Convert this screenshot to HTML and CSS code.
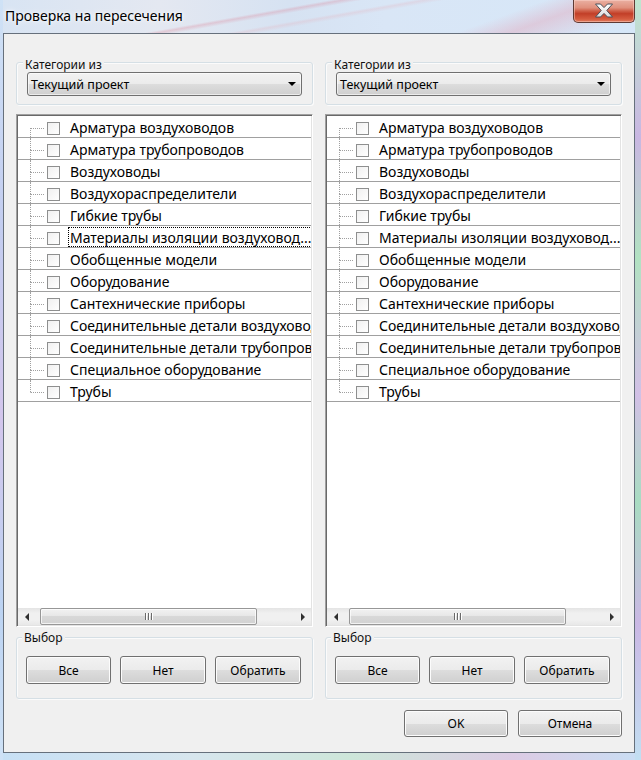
FILE: index.html
```html
<!DOCTYPE html>
<html lang="ru">
<head>
<meta charset="utf-8">
<title>Проверка на пересечения</title>
<link rel="stylesheet" href="styles.css">
</head>
<body>
<div class="window">
  <div class="titlebar">
    <div class="title">Проверка на пересечения</div>
    <div class="close">
      <svg width="20" height="15" viewBox="0 0 20 15">
        <defs>
          <linearGradient id="xg" x1="0" y1="0" x2="0" y2="1">
            <stop offset="0" stop-color="#ffffff"/>
            <stop offset="1" stop-color="#dcdcdc"/>
          </linearGradient>
        </defs>
        <polygon points="1.5,1 6.5,1 10,4.6 13.5,1 18.5,1 12.8,7.5 18.5,14 13.5,14 10,10.4 6.5,14 1.5,14 7.2,7.5" fill="url(#xg)" stroke="#4a4f58" stroke-width="1" stroke-linejoin="round"/>
      </svg>
    </div>
  </div>
  <div class="client">
    <div class="panels">
      <div class="panel">
        <div class="group cat">
          <div class="group-label">Категории из</div>
          <div class="combo"><span>Текущий проект</span><span class="combo-arrow"></span></div>
        </div>
        <div class="listbox">
          <div class="rows">
            <div class="row first"><span class="branch"><span class="b-top"></span><span class="b-bot"></span></span><span class="check"></span><span class="label">Арматура воздуховодов</span></div>
            <div class="row"><span class="branch"><span class="b-top"></span><span class="b-bot"></span></span><span class="check"></span><span class="label">Арматура трубопроводов</span></div>
            <div class="row"><span class="branch"><span class="b-top"></span><span class="b-bot"></span></span><span class="check"></span><span class="label">Воздуховоды</span></div>
            <div class="row"><span class="branch"><span class="b-top"></span><span class="b-bot"></span></span><span class="check"></span><span class="label">Воздухораспределители</span></div>
            <div class="row"><span class="branch"><span class="b-top"></span><span class="b-bot"></span></span><span class="check"></span><span class="label">Гибкие трубы</span></div>
            <div class="row"><span class="branch"><span class="b-top"></span><span class="b-bot"></span></span><span class="check"></span><span class="label focus">Материалы изоляции воздуховод...</span></div>
            <div class="row"><span class="branch"><span class="b-top"></span><span class="b-bot"></span></span><span class="check"></span><span class="label">Обобщенные модели</span></div>
            <div class="row"><span class="branch"><span class="b-top"></span><span class="b-bot"></span></span><span class="check"></span><span class="label">Оборудование</span></div>
            <div class="row"><span class="branch"><span class="b-top"></span><span class="b-bot"></span></span><span class="check"></span><span class="label">Сантехнические приборы</span></div>
            <div class="row"><span class="branch"><span class="b-top"></span><span class="b-bot"></span></span><span class="check"></span><span class="label">Соединительные детали воздуховодов</span></div>
            <div class="row"><span class="branch"><span class="b-top"></span><span class="b-bot"></span></span><span class="check"></span><span class="label">Соединительные детали трубопроводов</span></div>
            <div class="row"><span class="branch"><span class="b-top"></span><span class="b-bot"></span></span><span class="check"></span><span class="label">Специальное оборудование</span></div>
            <div class="row last"><span class="branch"><span class="b-top"></span><span class="b-bot"></span></span><span class="check"></span><span class="label">Трубы</span></div>
          </div>
          <div class="hscroll">
            <span class="sb-btn"><span class="arr-left"></span></span>
            <span class="sb-track"><span class="sb-thumb"><span class="grip"></span><span class="grip"></span><span class="grip"></span></span></span>
            <span class="sb-btn"><span class="arr-right"></span></span>
          </div>
        </div>
        <div class="group sel">
          <div class="group-label">Выбор</div>
          <div class="btn-row">
            <button class="btn b1">Все</button>
            <button class="btn b2">Нет</button>
            <button class="btn b3">Обратить</button>
          </div>
        </div>
      </div>

      <div class="panel">
        <div class="group cat">
          <div class="group-label">Категории из</div>
          <div class="combo"><span>Текущий проект</span><span class="combo-arrow"></span></div>
        </div>
        <div class="listbox">
          <div class="rows">
            <div class="row first"><span class="branch"><span class="b-top"></span><span class="b-bot"></span></span><span class="check"></span><span class="label">Арматура воздуховодов</span></div>
            <div class="row"><span class="branch"><span class="b-top"></span><span class="b-bot"></span></span><span class="check"></span><span class="label">Арматура трубопроводов</span></div>
            <div class="row"><span class="branch"><span class="b-top"></span><span class="b-bot"></span></span><span class="check"></span><span class="label">Воздуховоды</span></div>
            <div class="row"><span class="branch"><span class="b-top"></span><span class="b-bot"></span></span><span class="check"></span><span class="label">Воздухораспределители</span></div>
            <div class="row"><span class="branch"><span class="b-top"></span><span class="b-bot"></span></span><span class="check"></span><span class="label">Гибкие трубы</span></div>
            <div class="row"><span class="branch"><span class="b-top"></span><span class="b-bot"></span></span><span class="check"></span><span class="label">Материалы изоляции воздуховод...</span></div>
            <div class="row"><span class="branch"><span class="b-top"></span><span class="b-bot"></span></span><span class="check"></span><span class="label">Обобщенные модели</span></div>
            <div class="row"><span class="branch"><span class="b-top"></span><span class="b-bot"></span></span><span class="check"></span><span class="label">Оборудование</span></div>
            <div class="row"><span class="branch"><span class="b-top"></span><span class="b-bot"></span></span><span class="check"></span><span class="label">Сантехнические приборы</span></div>
            <div class="row"><span class="branch"><span class="b-top"></span><span class="b-bot"></span></span><span class="check"></span><span class="label">Соединительные детали воздуховодов</span></div>
            <div class="row"><span class="branch"><span class="b-top"></span><span class="b-bot"></span></span><span class="check"></span><span class="label">Соединительные детали трубопроводов</span></div>
            <div class="row"><span class="branch"><span class="b-top"></span><span class="b-bot"></span></span><span class="check"></span><span class="label">Специальное оборудование</span></div>
            <div class="row last"><span class="branch"><span class="b-top"></span><span class="b-bot"></span></span><span class="check"></span><span class="label">Трубы</span></div>
          </div>
          <div class="hscroll">
            <span class="sb-btn"><span class="arr-left"></span></span>
            <span class="sb-track"><span class="sb-thumb"><span class="grip"></span><span class="grip"></span><span class="grip"></span></span></span>
            <span class="sb-btn"><span class="arr-right"></span></span>
          </div>
        </div>
        <div class="group sel">
          <div class="group-label">Выбор</div>
          <div class="btn-row">
            <button class="btn b1">Все</button>
            <button class="btn b2">Нет</button>
            <button class="btn b3">Обратить</button>
          </div>
        </div>
      </div>
    </div>
    <div class="footer">
      <button class="btn wide">OK</button>
      <button class="btn wide">Отмена</button>
    </div>
  </div>
</div>
</body>
</html>
```

FILE: styles.css
```css
* { box-sizing: border-box; }

html, body {
  margin: 0;
  padding: 0;
}

body {
  width: 641px;
  height: 760px;
  overflow: hidden;
  font-family: "Noto Sans", "Open Sans", sans-serif;
  color: #000;
  background:
    linear-gradient(180deg, #bfe6cf 0%, #c9b7e2 18%, #b2e2c2 34%, #d2c0e6 52%, #a9dcc2 66%, #cab8e4 82%, #c2dff2 100%) right top / 6px 100% no-repeat,
    linear-gradient(180deg, #cfe2f6 0%, #c3cdf0 30%, #d3c6ec 55%, #bcd3f2 80%, #cfe2f6 100%) left top / 3px 100% no-repeat,
    linear-gradient(90deg, #c7e0f5 0%, #d7e6ee 30%, #cde6d9 55%, #dccbe4 80%, #c9def4 100%) left bottom / 100% 8px no-repeat,
    linear-gradient(160deg, transparent 0 20%, rgba(230,150,170,.35) 22%, transparent 25%, transparent 34%, rgba(160,200,240,.45) 36%, transparent 40%),
    linear-gradient(170deg, transparent 0 48%, rgba(220,120,140,.28) 50%, transparent 53%, transparent 60%, rgba(230,170,180,.25) 62%, transparent 65%) 0 0 / 460px 40px no-repeat,
    linear-gradient(90deg, #d8e4f3 0%, #e4e8f1 25%, #d6e2f2 45%, #d9e6f6 60%, #d6e7f8 100%);
}

.window {
  height: 760px;
  display: flex;
  flex-direction: column;
}

/* ---------- title bar ---------- */
.titlebar {
  height: 33px;
  flex: none;
  display: flex;
  align-items: flex-start;
  padding: 0 6px 0 5px;
}

.title {
  font-size: 14px;
  line-height: 20px;
  padding-top: 6px;
  color: #000;
  text-shadow: 0 0 6px rgba(255,255,255,.95), 0 0 3px rgba(255,255,255,.9);
  letter-spacing: 0;
}

.close {
  margin-left: auto;
  width: 62px;
  height: 23px;
  border: 1px solid #5e3a34;
  border-top: none;
  border-radius: 0 0 5px 5px;
  background: linear-gradient(180deg, #eab0a2 0%, #e0907d 35%, #cf5f48 50%, #c23f28 62%, #d45a3e 85%, #e07a5c 100%);
  box-shadow: inset 0 0 0 1px rgba(255,220,210,.45);
  display: flex;
  align-items: center;
  justify-content: center;
  padding-bottom: 1px;
}

/* ---------- client ---------- */
.client {
  margin: 0 6px 0 3px;
  height: 720px;
  flex: none;
  border: 1px solid #66707c;
  background: #f0f0f0;
  padding: 28px 12px 0 12px;
}

.panels {
  display: flex;
  gap: 12px;
}

.panel {
  width: 297px;
  display: flex;
  flex-direction: column;
}

.group {
  border: 1px solid #d5dfe5;
  border-radius: 3px;
  box-shadow: 1px 1px 0 #fbfbfb, inset 1px 1px 0 #fbfbfb;
}

.group-label {
  width: fit-content;
  height: 16px;
  line-height: 16px;
  font-size: 12px;
  padding: 0 2px;
  background: #f0f0f0;
  color: #101010;
  white-space: nowrap;
}

.cat {
  height: 43px;
  padding: 0 10px;
}

.cat .group-label {
  height: 15px;
  margin: -6px 0 0 -4px;
}

.combo {
  height: 24px;
  margin-top: 0;
  border: 1px solid #707070;
  border-radius: 3px;
  background: linear-gradient(180deg, #f2f2f2 0%, #ebebeb 50%, #dddddd 50%, #cfcfcf 100%);
  box-shadow: inset 0 0 0 1px rgba(255,255,255,.6);
  display: flex;
  align-items: center;
  padding: 0 5px 0 3px;
  font-size: 12.5px;
  white-space: nowrap;
}

.combo-arrow {
  margin-left: auto;
  width: 0;
  height: 0;
  border-left: 4px solid transparent;
  border-right: 4px solid transparent;
  border-top: 4px solid #000;
}

/* ---------- list ---------- */
.listbox {
  height: 513px;
  margin-top: 9px;
  padding: 1px;
  display: flex;
  flex-direction: column;
  background: #fff;
  border: 1px solid;
  border-color: #a0a0a0 #ffffff #ffffff #a0a0a0;
  box-shadow: inset 1px 1px 0 #696969, inset -1px -1px 0 #e3e3e3;
}

.rows {
  flex: 1;
  overflow: hidden;
  background: #fff;
}

.row {
  height: 22px;
  border-bottom: 1px solid #a0a0a0;
  display: flex;
  align-items: stretch;
  white-space: nowrap;
  font-size: 14px;
}

.branch {
  flex: none;
  width: 14px;
  margin-left: 12px;
  display: flex;
  flex-direction: column;
}

.b-top {
  height: 12px;
  border-left: 1px dotted #a0a0a0;
}

.b-bot {
  flex: 1;
  border-top: 1px dotted #a0a0a0;
  border-left: 1px dotted #a0a0a0;
}

.row.first .b-top { border-left-color: transparent; }
.row.last .b-bot { border-left-color: transparent; }

.check {
  flex: none;
  width: 13px;
  height: 13px;
  margin: 6px 0 0 3px;
  border: 1px solid #8e8f8f;
  background: linear-gradient(135deg, #f0f0f0, #ffffff);
}

.label {
  flex: none;
  margin: 1px 0 0 8px;
  padding: 0 1px;
  height: 20px;
  line-height: 19px;
  border: 1px dotted transparent;
}

.label.focus {
  border-color: #000;
}

/* ---------- scrollbar ---------- */
.hscroll {
  height: 17px;
  flex: none;
  display: flex;
  background: linear-gradient(180deg, #e4e4e4 0%, #f0f0f0 30%, #f0f0f0 70%, #e8e8e8 100%);
}

.sb-btn {
  width: 17px;
  flex: none;
  display: flex;
  align-items: center;
  justify-content: center;
}

.arr-left {
  width: 0; height: 0;
  border-top: 4px solid transparent;
  border-bottom: 4px solid transparent;
  border-right: 4px solid #303030;
}

.arr-right {
  width: 0; height: 0;
  border-top: 4px solid transparent;
  border-bottom: 4px solid transparent;
  border-left: 4px solid #303030;
}

.sb-track {
  flex: 1;
  display: flex;
}

.sb-thumb {
  margin-left: 5px;
  width: 217px;
  height: 17px;
  border: 1px solid #979797;
  border-radius: 2px;
  background: linear-gradient(180deg, #f2f2f2 0%, #e6e6e6 50%, #d8d8d8 50%, #d2d2d2 100%);
  box-shadow: inset 0 0 0 1px rgba(255,255,255,.7);
  display: flex;
  align-items: center;
  justify-content: center;
  gap: 2px;
}

.grip {
  width: 1px;
  height: 7px;
  background: #6a6a6a;
  box-shadow: 1px 0 0 #ffffff;
}

/* ---------- selection group ---------- */
.sel {
  height: 62px;
  margin-top: 10px;
  padding: 0 11px 0 9px;
}

.sel .group-label {
  margin: -8px 0 0 -4px;
  height: 15px;
}

.btn-row {
  margin-top: 11px;
  display: flex;
  justify-content: space-between;
}

.btn {
  height: 28px;
  margin: 0;
  padding: 0;
  border: 1px solid #707070;
  border-radius: 3px;
  background: linear-gradient(180deg, #f2f2f2 0%, #ebebeb 50%, #dddddd 50%, #cfcfcf 100%);
  box-shadow: inset 0 0 0 1px #fcfcfc;
  font-family: "Noto Sans", "Open Sans", sans-serif;
  font-size: 12px;
  color: #000;
}

.b1 { width: 85px; }
.b2 { width: 86px; }
.b3 { width: 86px; }

/* ---------- footer ---------- */
.footer {
  margin-top: 11px;
  display: flex;
  justify-content: flex-end;
  gap: 10px;
}

.btn.wide {
  width: 104px;
  height: 27px;
}
```
